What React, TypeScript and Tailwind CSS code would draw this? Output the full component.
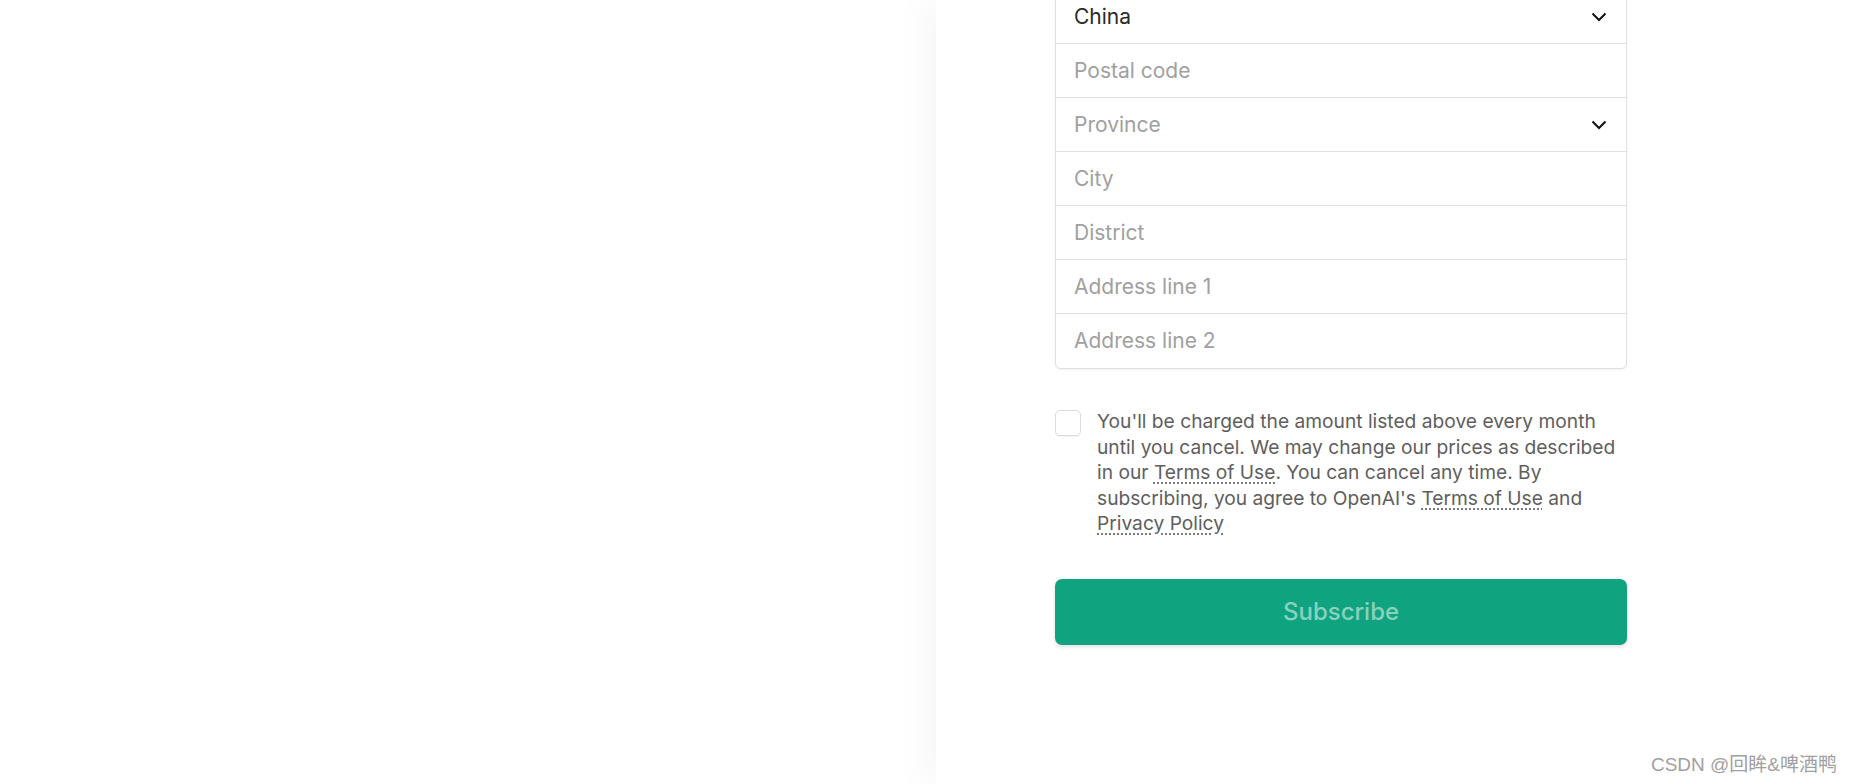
const rows = [
  { label: "China", value: true, select: true },
  { label: "Postal code" },
  { label: "Province", select: true },
  { label: "City" },
  { label: "District" },
  { label: "Address line 1" },
  { label: "Address line 2" },
];

function Chevron() {
  return (
    <svg width="16" height="10" viewBox="0 0 16 10" fill="none" stroke="#111" strokeWidth="2" className="shrink-0">
      <path d="M1.5 1.5l6.5 6.5 6.5-6.5" />
    </svg>
  );
}

export default function App() {
  return (
    <div
      className="relative flex h-[784px] w-[1855px] overflow-hidden bg-white"
      style={{ fontFamily: "Inter, 'Noto Sans', sans-serif" }}
    >
      {/* Left summary side (scrolled out of view) */}
      <div className="w-[936px] shrink-0 bg-white" />

      {/* Payment form side */}
      <div className="flex-1 bg-white pl-[119px] shadow-[-15px_0_30px_0_rgba(0,0,0,0.03)]">
        <div className="-mt-[11px] w-[572px]">
          <div className="overflow-hidden rounded-[6px] border border-[#e0e0e0] bg-white shadow-[0_1px_2px_rgba(0,0,0,0.07)]">
            {rows.map((r, i) => (
              <div
                key={r.label}
                className={`flex items-center justify-between pl-[18px] pr-[19px] ${
                  i < rows.length - 1 ? "h-[54px] border-b border-[#e0e0e0]" : "h-[54px]"
                }`}
              >
                <span className={`text-[21px] ${r.value ? "text-[#2a2a2a]" : "text-[#a0a0a0]"}`}>{r.label}</span>
                {r.select && <Chevron />}
              </div>
            ))}
          </div>

          <div className="mt-[40px] flex gap-[16px]">
            <div className="mt-[1px] h-[26px] w-[26px] shrink-0 rounded-[5px] border border-[#dcdcdc] bg-white shadow-[0_1px_1px_rgba(0,0,0,0.05)]" />
            <p className="-mr-[4px] text-[19.2px] leading-[25.5px] text-[#5e5e5e]">
              You'll be charged the amount listed above every month until you cancel. We may change our prices as
              described in our{" "}
              <span className="underline decoration-dotted decoration-[#777] underline-offset-[4px]">Terms of Use</span>. You
              can cancel any time. By subscribing, you agree to OpenAI's{" "}
              <span className="underline decoration-dotted decoration-[#777] underline-offset-[4px]">Terms of Use</span> and{" "}
              <span className="underline decoration-dotted decoration-[#777] underline-offset-[4px]">Privacy Policy</span>
            </p>
          </div>

          <button className="mt-[42px] flex h-[66px] w-full items-center justify-center rounded-[7px] bg-[#10a37f] text-[24px] font-medium text-white/50 shadow-[0_2px_4px_rgba(0,0,0,0.12)]">
            Subscribe
          </button>
        </div>
      </div>

      {/* CSDN watermark */}
      <div
        className="absolute bottom-[5px] right-[18px] text-[19px] text-[#a0a0a0]"
        style={{ fontFamily: "'Liberation Sans', 'Noto Sans CJK SC', sans-serif" }}
      >
        CSDN @回眸&amp;啤酒鸭
      </div>
    </div>
  );
}
